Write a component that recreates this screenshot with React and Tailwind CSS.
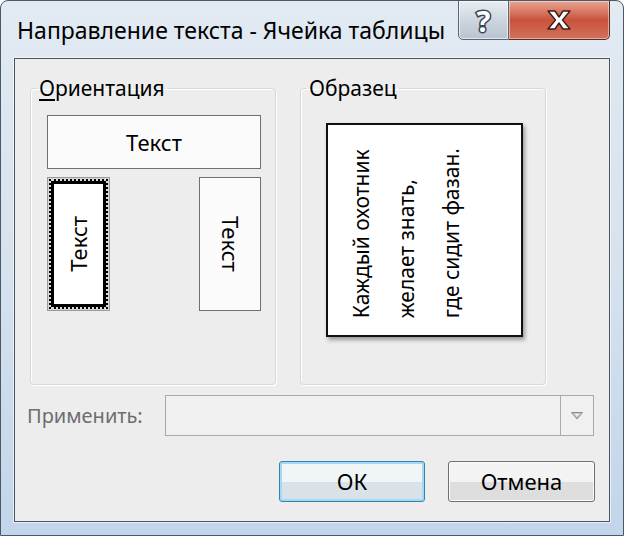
import React from 'react'

const font = { fontFamily: '"Noto Sans", "Open Sans", sans-serif' }

function TitleButtons() {
  return (
    <div className="-mt-px flex self-start">
      <div className="flex h-[40px] w-[51px] items-center justify-center rounded-bl-[5px] border border-[#5c6670] bg-gradient-to-b from-[#e9eef3] via-[#cdd6df] to-[#b8c4d0] shadow-[inset_0_0_0_1px_rgba(255,255,255,0.6)]">
        <span className="text-[29px] font-bold leading-none text-white [-webkit-text-stroke:3px_#3a4550] [paint-order:stroke_fill]">?</span>
      </div>
      <div className="flex h-[40px] w-[101px] items-center justify-center rounded-br-[5px] border border-l-0 border-[#5a2b25] bg-gradient-to-b from-[#e8a594] via-[#c9523c] to-[#d2715c] shadow-[inset_0_0_0_1px_rgba(255,255,255,0.45)]">
        <svg width="28" height="22" viewBox="0 0 28 22">
          <path
            d="M3 2 L10 2 L14 8 L18 2 L25 2 L17.5 11 L25 20 L18 20 L14 14 L10 20 L3 20 L10.5 11 Z"
            fill="#ffffff"
            stroke="#3c1f1a"
            strokeWidth="1.4"
            strokeLinejoin="round"
          />
        </svg>
      </div>
    </div>
  )
}

function OrientButton({ children, dir, selected, className = '' }) {
  const text =
    dir === 'up' ? (
      <span className="rotate-180 [writing-mode:vertical-rl]">{children}</span>
    ) : dir === 'down' ? (
      <span className="[writing-mode:vertical-rl]">{children}</span>
    ) : (
      <span>{children}</span>
    )
  if (selected) {
    return (
      <div className={`border border-[#9a9a9a] bg-[#d8d8d8] p-px ${className}`}>
        <div className="h-full border-[2px] border-dotted border-black">
          <div className="flex h-full items-center justify-center border-[3px] border-black bg-white text-[22px] text-black">
            {text}
          </div>
        </div>
      </div>
    )
  }
  return (
    <div className={`flex items-center justify-center border border-[#6f6f6f] bg-[#fbfbfb] text-[22px] text-black ${className}`}>
      {text}
    </div>
  )
}

function Group({ label, children, className = '' }) {
  return (
    <fieldset className={`rounded-[4px] border border-[#d3d8dc] shadow-[inset_1px_1px_0_#ffffff,1px_1px_0_#ffffff] ${className}`}>
      <legend className="ml-[6px] px-[2px] text-[21px] leading-[26px] text-black">{label}</legend>
      {children}
    </fieldset>
  )
}

export default function App() {
  return (
    <div
      className="flex h-[536px] w-[624px] flex-col overflow-hidden rounded-t-[8px] border border-[#4b5866] bg-gradient-to-b from-[#e2eaf2] via-[#d6e2ee] to-[#c2d5ea] pb-[13px] pl-[13px] pr-[13px]"
      style={font}
    >
      {/* title bar */}
      <div className="flex h-[57px] shrink-0 items-start justify-between">
        <div className="pl-[3px] pt-[15px] text-[23px] leading-[28px] text-black">
          Направление текста - Ячейка таблицы
        </div>
        <TitleButtons />
      </div>

      {/* client area */}
      <div className="flex flex-1 flex-col border border-[#4a5560] bg-[#ededed] shadow-[0_0_0_1px_rgba(255,255,255,0.6)]">
        <div className="flex gap-[24px] pl-[15px] pt-[16px]">
          <Group label={<><span className="underline underline-offset-[3px]">О</span>риентация</>} className="h-[310px] w-[246px]">
            <div className="flex flex-col gap-[8px] pl-[16px] pr-[14px] pt-[14px]">
              <OrientButton dir="h" className="h-[54px]">Текст</OrientButton>
              <div className="flex justify-between">
                <OrientButton dir="up" selected className="h-[134px] w-[63px]">Текст</OrientButton>
                <OrientButton dir="down" className="h-[134px] w-[62px]">Текст</OrientButton>
              </div>
            </div>
          </Group>
          <Group label="Образец" className="h-[310px] w-[246px]">
            <div className="pl-[25px] pt-[22px]">
              <div className="flex h-[214px] w-[197px] items-end border-2 border-[#111] bg-white pb-[17px] pl-[11px] shadow-[2px_3px_4px_rgba(0,0,0,0.35)]">
                <div className="rotate-180 text-[21px] leading-[45px] text-black [writing-mode:vertical-rl]">
                  <div>Каждый охотник</div>
                  <div>желает знать,</div>
                  <div>где сидит фазан.</div>
                </div>
              </div>
            </div>
          </Group>
        </div>

        {/* apply row */}
        <div className="flex items-center pl-[12px] pt-[10px]">
          <span className="w-[138px] text-[20px] text-[#6d6d6d]">Применить:</span>
          <div className="flex h-[41px] w-[429px] border border-[#a9a9a9] bg-[#f0f0f0]">
            <div className="flex-1" />
            <div className="flex w-[33px] items-center justify-center border-l border-[#a9a9a9]">
              <svg width="12" height="8" viewBox="0 0 12 8">
                <path d="M0.5 0.5 L11.5 0.5 L6 7 Z" fill="#c8c8c8" stroke="#8a8a8a" strokeWidth="1" />
                <path d="M4 2 L8 2 L6 4.5 Z" fill="#f4f4f4" />
              </svg>
            </div>
          </div>
        </div>

        {/* buttons */}
        <div className="flex justify-end gap-[23px] pr-[14px] pt-[25px]">
          <button className="h-[41px] w-[146px] rounded-[3px] border border-[#3a7fae] bg-gradient-to-b from-[#f0f5f8] from-50% to-[#d9e2e8] to-50% text-[22px] text-black shadow-[inset_0_0_0_2px_#9fdcf3]">
            ОК
          </button>
          <button className="h-[41px] w-[147px] rounded-[3px] border border-[#707070] bg-gradient-to-b from-[#f3f3f3] from-50% to-[#dedede] to-50% text-[22px] text-black shadow-[inset_0_0_0_1px_#fbfbfb]">
            Отмена
          </button>
        </div>
      </div>
    </div>
  )
}
